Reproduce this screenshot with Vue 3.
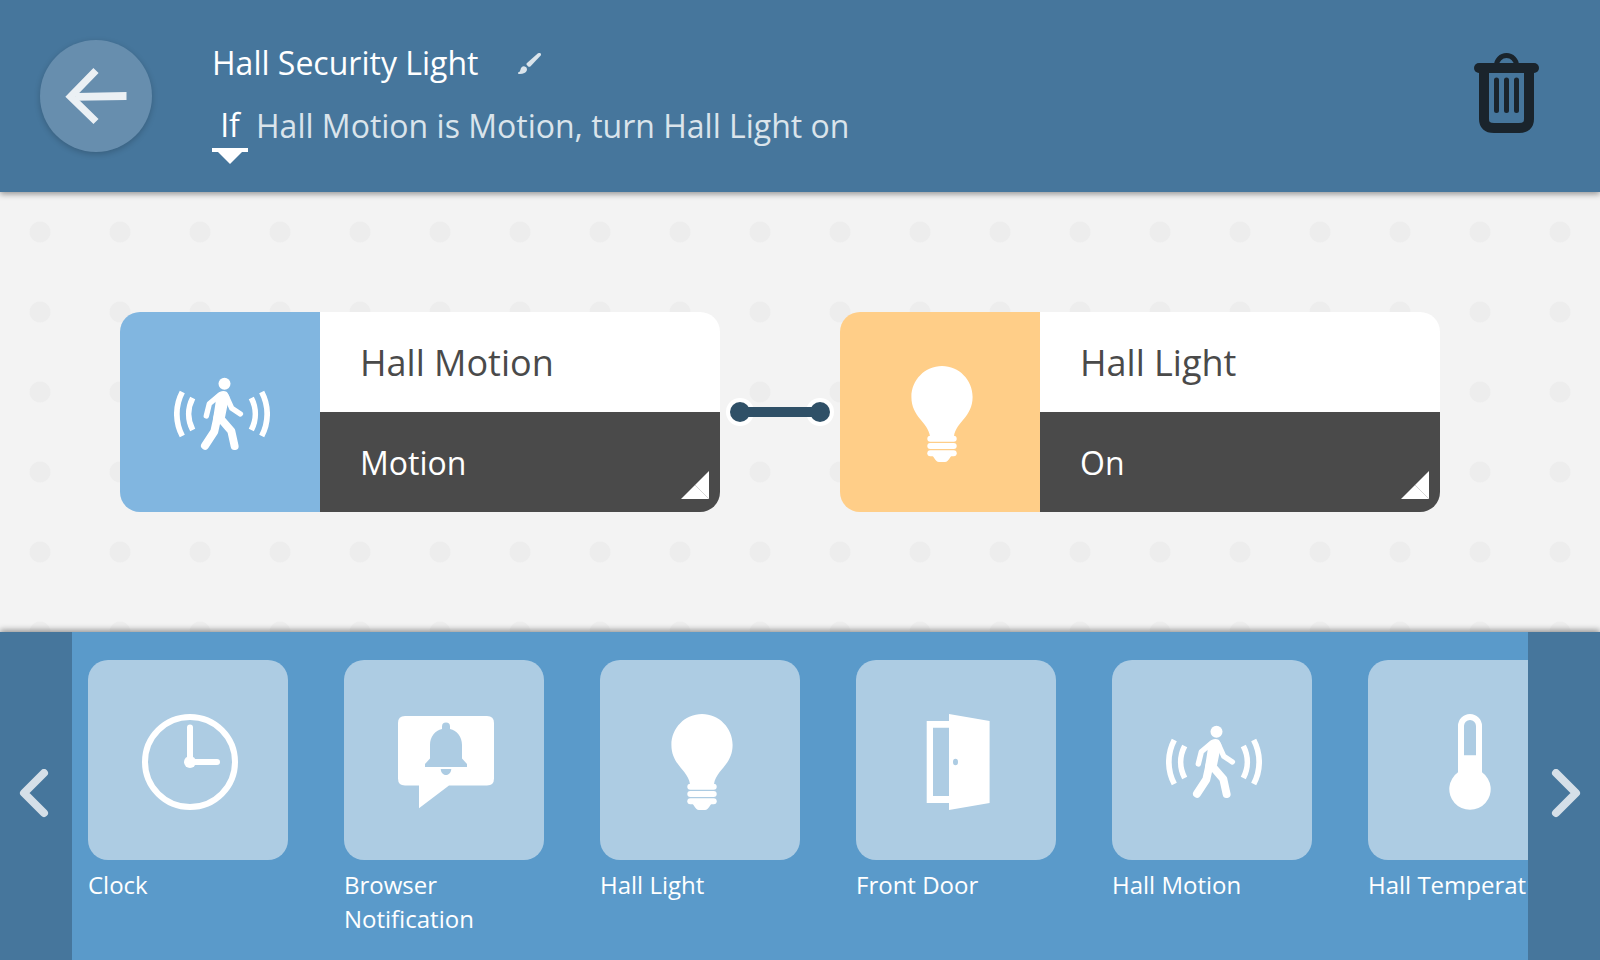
<script setup>
import { ref, h } from 'vue'

const mode = ref('If')
const modes = ['If', 'When']

const rule = {
  title: 'Hall Security Light',
  sentence: 'Hall Motion is Motion, turn Hall Light on'
}

const nodes = [
  { name: 'Hall Motion', value: 'Motion', icon: 'motion', tone: 'blue' },
  { name: 'Hall Light', value: 'On', icon: 'bulb', tone: 'amber' }
]

const devices = [
  { label: 'Clock', icon: 'clock' },
  { label: 'Browser Notification', icon: 'message' },
  { label: 'Hall Light', icon: 'bulb' },
  { label: 'Front Door', icon: 'door' },
  { label: 'Hall Motion', icon: 'motion' },
  { label: 'Hall Temperature', icon: 'thermometer' }
]

const line = (d, width, cap = 'round') =>
  h('path', {
    d,
    fill: 'none',
    stroke: 'currentColor',
    'stroke-width': width,
    'stroke-linecap': cap,
    'stroke-linejoin': 'round'
  })
const solid = (d) => h('path', { d, 'fill-rule': 'evenodd' })

const shapes = {
  clock: () => [
    h('circle', { cx: 48, cy: 48, r: 45, fill: 'none', stroke: 'currentColor', 'stroke-width': 6 }),
    line('M48 13.5V48H75', 6),
    h('circle', { cx: 48, cy: 48, r: 6 })
  ],
  message: () => [
    solid(
      'M7 2H89Q96 2 96 9V64.500Q96 71.500 89 71.500H51L21 94.3V71.500H7Q0 71.500 0 64.500V9Q0 2 7 2Z' +
      'M27 53H69V50L64 44.5V31C64 23 59 16.5 52 15V12.5A4 4 0 0 0 44 12.5V15C37 16.5 32 23 32 31V44.5L27 50Z' +
      'M42.7 55H53.3C53 58.5 51 61 48 61S43 58.5 42.7 55Z'
    )
  ],
  bulb: () => [
    solid('M48 0C65 0 78.600 14 78.600 31C78.600 51 62 56 60 70H36C34 56 17.400 51 17.400 31C17.400 14 31 0 48 0Z'),
    h('rect', { x: 33.3, y: 69.7, width: 29.4, height: 6, rx: 3 }),
    h('rect', { x: 33.3, y: 77, width: 29.4, height: 6, rx: 3 }),
    h('rect', { x: 33.3, y: 84.2, width: 29.4, height: 6, rx: 3 }),
    solid('M37 89C40.500 90 41 96 45 96H51C55 96 55.500 90 59 89Z')
  ],
  door: () => [
    solid('M16.700 7H39V0L79.600 7V89L39 96V89H16.700ZM23 13.700V82H39V13.700ZM45.500 44.700A2.500 3.300 0 0 0 45.500 51.300A2.500 3.300 0 0 0 45.500 44.700Z')
  ],
  motion: () => [
    h('circle', { cx: 50.5, cy: 17.7, r: 6 }),
    solid('M41 30.500L46 25.800Q49.500 24 53 26L55.500 31L53.500 39L51 51.500L46 57L39 53L41.500 37Z'),
    line('M46 28.800L35.300 37.800L32.300 50', 5.4),
    line('M52 29.500L57.800 42.300L66.400 47.900', 5.4),
    line('M43.500 51L40.300 65.500L31 79.700', 8),
    line('M46.500 52.500L57.300 65L60.600 80', 8),
    line('M8.300 26A47 47 0 0 0 8.300 70', 5.7, 'butt'),
    line('M18.700 32A34.500 34.500 0 0 0 18.700 64', 5.7, 'butt'),
    line('M87.700 26A47 47 0 0 1 87.700 70', 5.7, 'butt'),
    line('M77.300 32A34.500 34.500 0 0 1 77.300 64', 5.7, 'butt')
  ],
  thermometer: () => [
    solid('M36 12A12 12 0 0 1 60 12V58.300A20.700 20.700 0 1 1 36 58.300ZM42 41.300H54V12A6 6 0 0 0 42 12Z')
  ]
}

const DeviceIcon = (props) =>
  h(
    'svg',
    { viewBox: '0 0 96 96', width: 96, height: 96, fill: 'currentColor', 'aria-hidden': 'true' },
    shapes[props.name]()
  )
DeviceIcon.props = ['name']
</script>

<template>
  <div class="editor">
    <header class="header">
      <button class="back" type="button" aria-label="Back">
        <svg viewBox="0 0 112 112" width="112" height="112" aria-hidden="true">
          <g opacity="0.87">
            <path d="M56 30.500L30.500 56.700L56 81.500" fill="none" stroke="#fff" stroke-width="7.300" />
            <path d="M35.500 53L86.500 52V60L35.500 60.700Z" fill="#fff" />
          </g>
        </svg>
      </button>

      <div class="summary">
        <div class="title-row">
          <h1 class="title">{{ rule.title }}</h1>
          <button class="rename" type="button" aria-label="Rename rule">
            <svg viewBox="0 0 23 21" width="23" height="21" fill="currentColor" aria-hidden="true">
              <path d="M20 0.300Q21.800 -0.400 22.700 0.400Q23.500 1.200 22.700 2.400L12.600 13.200Q11.300 14.400 10.200 13.400L8.800 12Q8 11 9 10Z" />
              <path d="M0 19.500Q2 19.300 2.400 17Q3.200 13.200 6 13.300Q9.400 14 8.900 17.200Q7.500 21.300 0.300 20.900Z" />
            </svg>
          </button>
        </div>
        <div class="rule-row">
          <label class="mode">
            <select v-model="mode" class="mode-select" aria-label="Rule type">
              <option v-for="m in modes" :key="m">{{ m }}</option>
            </select>
          </label>
          <p class="sentence">{{ rule.sentence }}</p>
        </div>
      </div>

      <button class="trash" type="button" aria-label="Delete rule">
        <svg viewBox="0 0 70 86" width="70" height="86" aria-hidden="true">
          <g fill="none" stroke="#1a242c">
            <path d="M27.500 13V12.500A10 10 0 0 1 47.500 12.500V13" stroke-width="5" />
            <path d="M10 15H65" stroke-width="10" stroke-linecap="round" />
            <path d="M15 15V66Q15 75 25 75H50Q60 75 60 66V15" stroke-width="10" />
            <path d="M27.500 27V57.500M37.500 27V57.500M47.500 27V57.500" stroke-width="5" stroke-linecap="round" />
          </g>
        </svg>
      </button>
    </header>

    <main class="canvas">
      <template v-for="(node, i) in nodes" :key="node.name">
        <svg v-if="i > 0" class="connector" viewBox="0 0 120 28" width="120" height="28" aria-hidden="true">
          <circle cx="20" cy="14" r="14" fill="#fff" />
          <circle cx="100" cy="14" r="14" fill="#fff" />
          <g fill="#2f5067">
            <circle cx="20" cy="14" r="10" />
            <circle cx="100" cy="14" r="10" />
            <rect x="20" y="9" width="80" height="10" />
          </g>
        </svg>
        <article class="node">
          <div class="node-icon" :class="node.tone"><DeviceIcon :name="node.icon" /></div>
          <div class="node-body">
            <h2 class="node-name">{{ node.name }}</h2>
            <button class="node-value" type="button">
              {{ node.value }}
              <svg class="corner" viewBox="0 0 28 28" width="28" height="28" aria-hidden="true">
                <path d="M28 0V28H0Z" fill="#fff" />
                <path d="M14 14L28 28" stroke="#bbb" stroke-width="0.600" />
              </svg>
            </button>
          </div>
        </article>
      </template>
    </main>

    <footer class="shelf">
      <button class="scroll" type="button" aria-label="Previous devices">
        <svg viewBox="0 0 40 54" width="40" height="54" aria-hidden="true">
          <path d="M28 4L8 24L28 44" />
        </svg>
      </button>
      <ul class="track">
        <li v-for="device in devices" :key="device.label" class="device">
          <button class="device-button" type="button">
            <span class="tile"><DeviceIcon :name="device.icon" /></span>
            <span class="device-label">{{ device.label }}</span>
          </button>
        </li>
      </ul>
      <button class="scroll" type="button" aria-label="Next devices">
        <svg viewBox="0 0 40 54" width="40" height="54" aria-hidden="true">
          <path d="M12 4L32 24L12 44" />
        </svg>
      </button>
    </footer>
  </div>
</template>

<style>
body {
  margin: 0;
}
</style>

<style scoped>
.editor {
  display: flex;
  flex-direction: column;
  min-height: 100vh;
  overflow: hidden;
  font-family: "Open Sans", "Noto Sans", sans-serif;
  color: #fff;
  background: #f3f3f3;
}
button {
  padding: 0;
  border: 0;
  background: none;
  color: inherit;
  font: inherit;
  cursor: pointer;
}
svg {
  display: block;
}

.header {
  position: relative;
  z-index: 1;
  display: flex;
  align-items: center;
  padding: 40px;
  background: #46769c;
  box-shadow: 0 2px 6px rgba(0, 0, 0, 0.4);
}
.back {
  width: 112px;
  height: 112px;
  border-radius: 50%;
  background: #678eae;
  box-shadow: 0 2px 6px rgba(0, 0, 0, 0.2);
}
.summary {
  flex: 1;
  margin-left: 60px;
}
.title-row {
  display: flex;
  align-items: center;
  gap: 40px;
  margin-bottom: 14px;
}
.title {
  margin: 0;
  font-size: 32px;
  font-weight: 400;
  line-height: 46px;
}
.rename {
  color: #dae4eb;
}
.rule-row {
  display: flex;
  gap: 8px;
}
.mode {
  position: relative;
  border-bottom: 4px solid #fff;
}
.mode::after {
  content: "";
  position: absolute;
  top: 52px;
  left: 6px;
  border: 12px solid transparent;
  border-top-color: #fff;
  border-bottom-width: 0;
}
.mode-select {
  display: block;
  box-sizing: border-box;
  width: 36px;
  height: 48px;
  padding: 2px 0 0;
  border: 0;
  appearance: none;
  background: none;
  color: #fff;
  font-family: inherit;
  font-size: 32px;
  font-weight: 500;
  line-height: 46px;
  text-align: center;
}
.mode-select option {
  color: #4a4a4a;
}
.sentence {
  margin: 0;
  font-size: 32px;
  line-height: 52px;
  color: #dae4eb;
}
.trash {
  display: flex;
  align-items: center;
  justify-content: center;
  width: 112px;
  height: 112px;
}

.canvas {
  flex: 1;
  display: flex;
  align-items: center;
  padding: 120px;
  background: radial-gradient(circle, #ededed 10px, transparent 11px) 0 0 / 80px 80px;
}
.connector {
  flex: none;
}
.node {
  display: flex;
  flex: 0 1 600px;
  border-radius: 20px;
  overflow: hidden;
}
.node-icon {
  flex: none;
  box-sizing: border-box;
  width: 200px;
  padding: 54px 0 0 54px;
}
.blue {
  background: #81b6e0;
}
.amber {
  background: #ffce88;
}
.node-body {
  flex: 1;
}
.node-name,
.node-value {
  display: block;
  box-sizing: border-box;
  width: 100%;
  margin: 0;
  padding: 2px 0 0 40px;
  line-height: 98px;
  font-weight: 400;
  text-align: left;
}
.node-name {
  background: #fff;
  color: #4a4a4a;
  font-size: 36px;
}
.node-value {
  position: relative;
  background: #4a4a4a;
  color: #fff;
  font-size: 32px;
}
.corner {
  position: absolute;
  right: 11px;
  bottom: 13px;
}

.shelf {
  position: relative;
  z-index: 1;
  display: flex;
  background: #5a9aca;
  box-shadow: 0 -2px 6px rgba(0, 0, 0, 0.4);
}
.scroll {
  flex: none;
  display: flex;
  align-items: center;
  justify-content: center;
  width: 72px;
  background: #46769c;
}
.scroll path {
  fill: none;
  stroke: #d5dfe8;
  stroke-width: 8;
  stroke-linecap: round;
  stroke-linejoin: round;
}
.track {
  flex: 1;
  display: flex;
  gap: 56px;
  min-width: 0;
  margin: 0;
  padding: 28px 16px 24px;
  overflow: hidden;
  list-style: none;
}
.device {
  flex: none;
  width: 200px;
}
.device-button {
  display: block;
  width: 100%;
  text-align: left;
}
.tile {
  display: block;
  box-sizing: border-box;
  height: 200px;
  padding: 54px 0 0 54px;
  border-radius: 20px;
  background: #adcce3;
}
.device-label {
  display: block;
  margin-top: 8px;
  font-size: 24px;
  line-height: 34px;
}
</style>
